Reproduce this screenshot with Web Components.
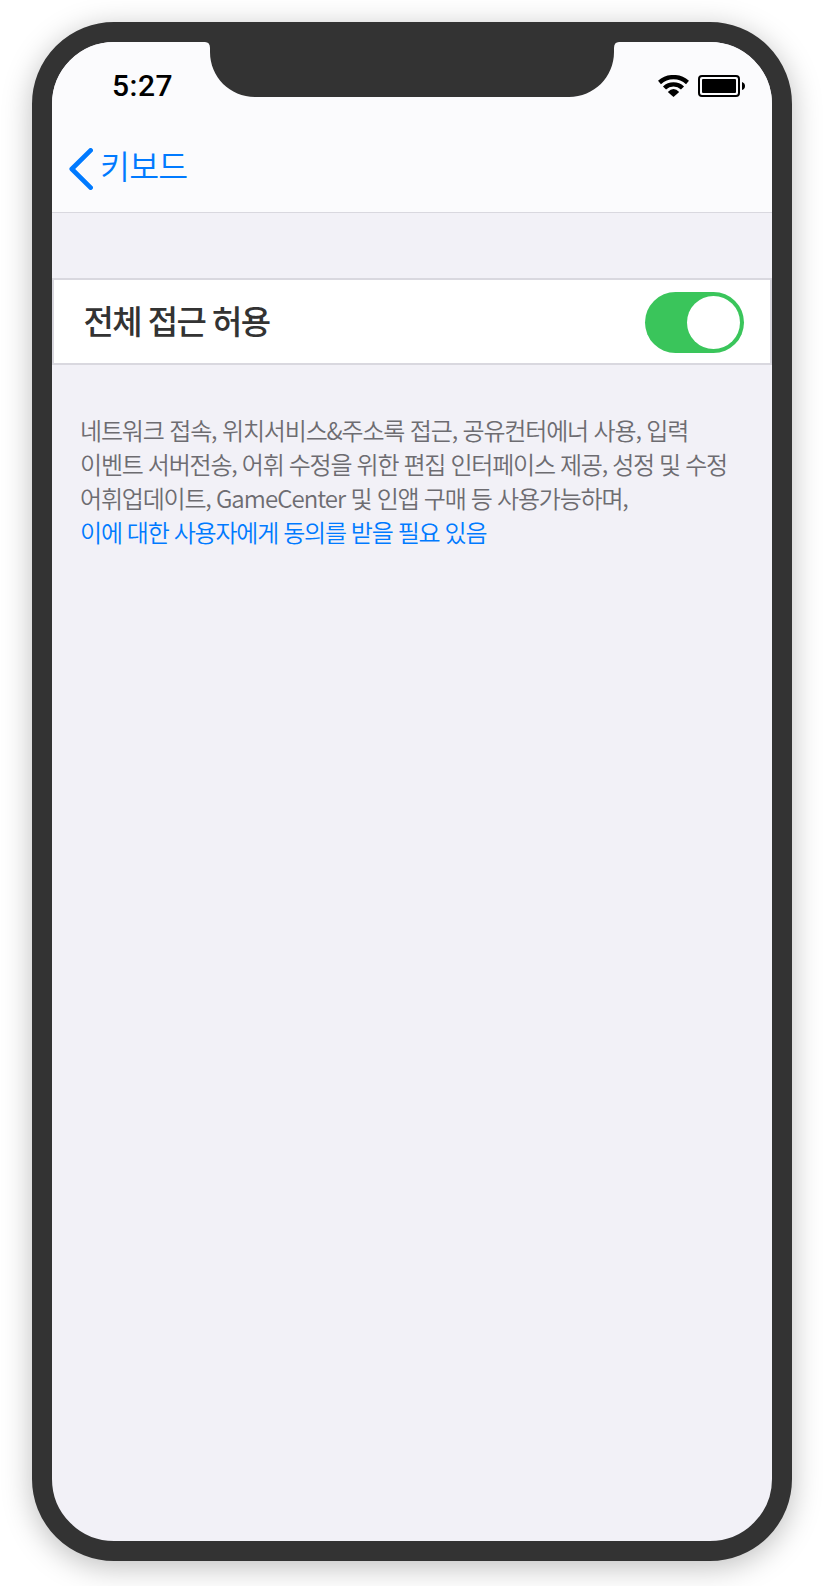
<!DOCTYPE html>
<html lang="ko">
<head>
<meta charset="utf-8">
<title>키보드</title>
<style>
html,body{margin:0;background:#fff}
body{width:824px;height:1586px;overflow:hidden;font-family:"Noto Sans CJK KR","Noto Sans",sans-serif}
.wide{letter-spacing:-1.16px}
.latin{letter-spacing:-.95px}
.mixed{word-spacing:-.2px}
.loose{word-spacing:-.35px}
.tight{word-spacing:-.45px}
</style>
</head>
<body>
<phone-frame>
  <status-bar time="5:27"></status-bar>
  <nav-bar>키보드</nav-bar>
  <setting-row>전체 접근 허용<toggle-switch slot="control"></toggle-switch></setting-row>
  <foot-note>
    <note-line class="wide">네트워크 접속, 위치서비스&amp;주소록 접근, 공유컨터에너 사용, 입력</note-line>
    <note-line class="loose">이벤트 서버전송, 어휘 수정을 위한 편집 인터페이스 제공, 성정 및 수정</note-line>
    <note-line class="mixed">어휘업데이트, <span class="latin">GameCenter</span> 및 인앱 구매 등 사용가능하며,</note-line>
    <note-line class="tight" accent>이에 대한 사용자에게 동의를 받을 필요 있음</note-line>
  </foot-note>
</phone-frame>
<script>
const define = (name, html, init) => customElements.define(name, class extends HTMLElement {
  constructor() {
    super();
    const t = document.createElement('template');
    t.innerHTML = html;
    this.attachShadow({mode: 'open'}).append(t.content.cloneNode(true));
  }
  connectedCallback() { if (init) init(this); }
});

define('phone-frame', `<style>
  :host{display:block;padding:22px 32px 25px}
  .body{box-sizing:border-box;width:760px;height:1539px;border:20px solid #333;border-radius:82px;background:#f2f1f7;box-shadow:0 6px 30px rgba(0,0,0,.26);position:relative}
  .screen{height:100%;border-radius:62px;overflow:hidden;display:flex;flex-direction:column}
  svg{position:absolute;left:153px;top:-1px;display:block}
</style>
<div class="body"><div class="screen"><slot></slot></div>
<svg width="414" height="56" viewBox="0 0 414 56"><path fill="#333" d="M0 0V1Q5 1 5 7V11C5 36 25 56 50 56H364C389 56 409 36 409 11V7Q409 1 414 1V0Z"/></svg></div>`);

define('status-bar', `<style>
  :host{display:flex;flex:none;justify-content:space-between;align-items:center;height:88px;box-sizing:border-box;padding:0 27px 0 60px;background:#fbfbfd;color:#000}
  .time{font:500 30px/36px Roboto,sans-serif;letter-spacing:.5px}
  .icons{display:flex;gap:9px;align-items:center}
  svg{display:block}
</style>
<span class="time"></span>
<span class="icons">
<svg width="31" height="22" viewBox="0 0 31 22"><g fill="none" stroke="#000" stroke-width="4.4"><path d="M1.5 7.5C9.4 .3 21.6 .3 29.5 7.5"/><path d="M6.5 13C11.5 8.2 19.5 8.2 24.5 13"/></g><path d="M9.8 17Q15.5 11.2 21.2 17L15.5 22Z"/></svg>
<svg width="47" height="22" viewBox="0 0 47 22"><rect x="1" y="1" width="40" height="20" rx="3" fill="none" stroke="#000" stroke-width="2"/><rect x="4" y="4" width="34" height="14" rx="1"/><path d="M44 7Q47 8 47 11T44 15Z"/></svg>
</span>`, el => { el.shadowRoot.querySelector('.time').textContent = el.getAttribute('time'); });

define('nav-bar', `<style>
  :host{display:flex;flex:none;align-items:flex-start;height:83px;box-sizing:border-box;padding:11px 17px 0;background:#fbfbfd;border-bottom:1px solid #d9d8df;gap:7px;color:#007aff;font-size:32.5px;line-height:48px;font-weight:350;letter-spacing:-.022em}
  svg{display:block;margin-top:7px}
</style>
<svg width="24" height="42" viewBox="0 0 24 42"><path d="M21.6 2.4L2.8 21L21.6 39.6" fill="none" stroke="#007aff" stroke-width="4.7" stroke-linecap="round" stroke-linejoin="round"/></svg>
<span><slot></slot></span>`);

define('setting-row', `<style>
  :host{display:flex;flex:none;justify-content:space-between;align-items:center;height:87px;box-sizing:border-box;margin-top:65px;padding:1px 26px 0 29.5px;background:#fff;border:2px solid #d9d8df;color:#333;font-size:33px;line-height:48px;font-weight:500;letter-spacing:-.05em;word-spacing:-.7px}
  span{padding-bottom:4px}
</style><span><slot></slot></span><slot name="control"></slot>`);

define('toggle-switch', `<style>
  :host{display:flex;justify-content:flex-end;align-items:center;box-sizing:border-box;width:99px;height:61px;border-radius:31px;background:#3ac55b;padding-right:4px}
  i{display:block;width:53px;height:53px;border-radius:50%;background:#fff}
</style><i></i>`);

define('foot-note', `<style>
  :host{display:flex;flex:none;flex-direction:column;padding:48px 0 0 28px;color:#6d6c71;font-size:24px;line-height:34px;font-weight:350;letter-spacing:-.05em}
</style><slot></slot>`);

define('note-line', `<style>
  :host{display:block;white-space:nowrap}
  :host([accent]){color:#007aff}
</style><slot></slot>`);
</script>
</body>
</html>
